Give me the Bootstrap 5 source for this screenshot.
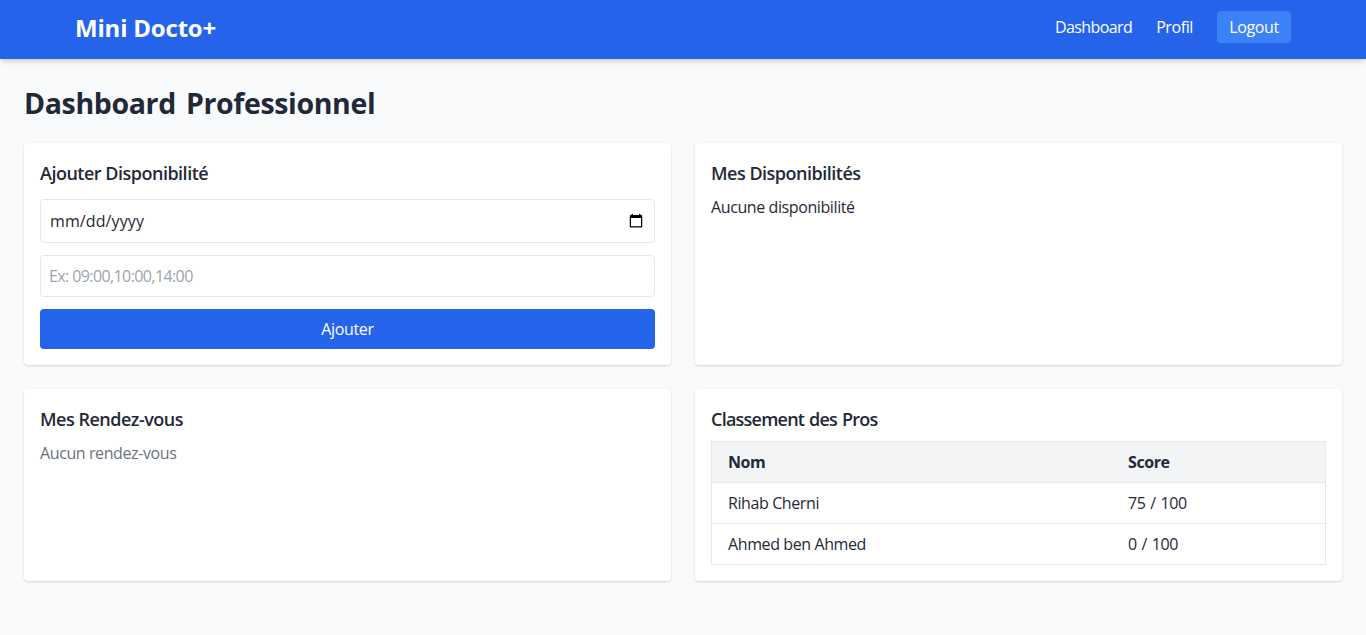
<!DOCTYPE html>
<html lang="en-US">
<head>
<meta charset="utf-8">
<meta name="viewport" content="width=device-width, initial-scale=1">
<title>Mini Docto+</title>
<link href="https://cdn.jsdelivr.net/npm/bootstrap@5.3.0/dist/css/bootstrap.min.css" rel="stylesheet">
<style>
body{font-family:"Segoe UI","Open Sans","Noto Sans",sans-serif;font-size:16px;line-height:24px;background:#f9fafb;color:#1f2937;letter-spacing:-.4px}
.topbar{background:#2563eb;height:59px;padding:0 75px 5px;box-shadow:0 4px 6px -1px rgba(0,0,0,.1),0 2px 4px -1px rgba(0,0,0,.12)}
.brand{font-size:24px;font-weight:700;line-height:32px;color:#fff;text-decoration:none;letter-spacing:-.2px;padding-top:1px}
.toplink{color:#fff;text-decoration:none}
.toplink:first-child{letter-spacing:-.6px}
.logout{background:#3b82f6;color:#fff;border:0;border-radius:4px;padding:4px 0;width:74px;height:32px;letter-spacing:inherit}
h1{font-size:28.5px;line-height:36px;font-weight:700;margin:2px 0 22px;letter-spacing:-.36px;word-spacing:3px}
.panel{background:#fff;border-radius:4px;padding:16px;box-shadow:0 1px 3px rgba(0,0,0,.1),0 1px 2px rgba(0,0,0,.06)}
h2{font-size:18px;line-height:28px;font-weight:600;margin:0 0 8px;letter-spacing:-.5px}
.rank-title{letter-spacing:-.77px;word-spacing:1px}
.slot-form{gap:12px}
.slot-form h2{margin:0}
.field{border:1px solid #e5e7eb;border-radius:4px;background:#fff;color:#1f2937;padding:0 8px}
.date-field{height:44px;padding-left:9px;letter-spacing:.1px}
.time-field{height:42px;letter-spacing:-.6px}
.time-field::placeholder{color:#9ca3af}
.add{height:40px;background:#2563eb;color:#fff;border:0;border-radius:4px;letter-spacing:-.35px}
.muted{color:#6b7280}
.rank{border:1px solid #e5e7eb;border-collapse:collapse}
.rank th,.rank td{padding:8px 16px;border-bottom:1px solid #e5e7eb}
.rank thead{background:#f3f4f6}
.rank th:first-child{width:400.5px}
.rank td:last-child{word-spacing:1px}
</style>
</head>
<body>
<nav class="topbar d-flex justify-content-between align-items-center">
<a class="brand" href="#">Mini Docto+</a>
<div class="d-flex align-items-center gap-4"><a class="toplink" href="#">Dashboard</a><a class="toplink" href="#">Profil</a><button class="logout">Logout</button></div>
</nav>
<main class="p-4">
<h1>Dashboard Professionnel</h1>
<div class="row g-4">
<div class="col-6"><form class="panel slot-form h-100 d-flex flex-column"><h2>Ajouter Disponibilité</h2>
<input type="date" class="field date-field" aria-label="Date">
<input type="text" class="field time-field" placeholder="Ex: 09:00,10:00,14:00"><button type="button" class="add">Ajouter</button></form></div>
<div class="col-6"><section class="panel h-100"><h2>Mes Disponibilités</h2><p class="m-0">Aucune disponibilité</p></section></div>
<div class="col-6"><section class="panel h-100"><h2>Mes Rendez-vous</h2><p class="m-0 muted">Aucun rendez-vous</p></section></div>
<div class="col-6"><section class="panel h-100"><h2 class="rank-title">Classement des Pros</h2>
<table class="rank w-100"><thead><tr><th>Nom</th><th>Score</th></tr></thead><tbody><tr><td>Rihab Cherni</td><td>75 / 100</td></tr><tr><td>Ahmed ben Ahmed</td><td>0 / 100</td></tr></tbody></table></section></div>
</div>
</main>
<script src="https://cdn.jsdelivr.net/npm/bootstrap@5.3.0/dist/js/bootstrap.bundle.min.js"></script>
</body>
</html>
